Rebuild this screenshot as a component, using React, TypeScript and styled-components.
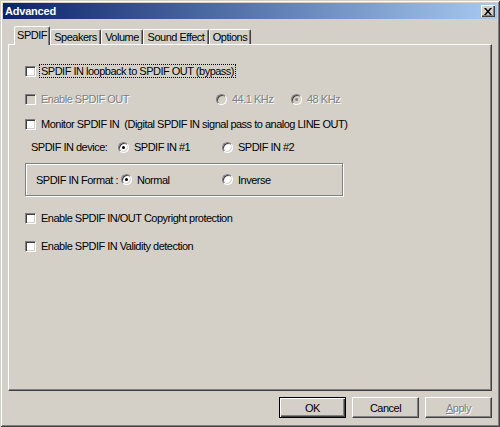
import React from 'react';
import styled, { createGlobalStyle } from 'styled-components';

const GlobalStyle = createGlobalStyle`
  html, body { margin: 0; padding: 0; background: #d4d0c8; }
  body { font-family: "Liberation Sans", Arial, sans-serif; }
`;

const Window = styled.div`
  box-sizing: border-box;
  width: 500px;
  height: 427px;
  padding: 3px;
  background: #d4d0c8;
  box-shadow: inset 1px 1px 0 #d4d0c8, inset -1px -1px 0 #404040, inset 2px 2px 0 #ffffff, inset -2px -2px 0 #808080;
  display: flex;
  flex-direction: column;
  font-size: 11px;
  letter-spacing: -0.5px;
  color: #000;
`;

const TitleBar = styled.div`
  height: 16px;
  display: flex;
  align-items: center;
  justify-content: space-between;
  padding: 0 2px 0 2px;
  background: linear-gradient(to right, #0a246a, #a6caf0);
`;

const Title = styled.span`
  color: #fff;
  font-weight: bold;
  font-size: 11px;
  letter-spacing: -0.2px;
  padding-left: 0;
`;

const CloseButton = styled.div`
  box-sizing: border-box;
  width: 14px;
  height: 12px;
  background: #d4d0c8;
  box-shadow: inset 1px 1px 0 #ffffff, inset -1px -1px 0 #404040, inset -2px -2px 0 #808080;
  display: flex;
  align-items: center;
  justify-content: center;
`;

const Body = styled.div`
  flex: 1;
  display: flex;
  flex-direction: column;
  padding: 0 5px;
`;

const TabStrip = styled.div`
  display: flex;
  align-items: flex-end;
  height: 18px;
  margin-top: 7px;
  padding-left: 6px;
`;

const Tab = styled.div<{ $active?: boolean; $w: number }>`
  box-sizing: border-box;
  position: relative;
  z-index: ${p => (p.$active ? 1 : 0)};
  width: ${p => p.$w}px;
  height: ${p => (p.$active ? 19 : 15)}px;
  margin-bottom: ${p => (p.$active ? -1 : 0)}px;
  background: #d4d0c8;
  border-top: 1px solid #fff;
  border-left: 1px solid #fff;
  border-right: 1px solid #404040;
  border-radius: 2px 2px 0 0;
  box-shadow: inset -1px 0 0 #808080;
  display: flex;
  align-items: ${p => (p.$active ? 'flex-start' : 'center')};
  padding-top: ${p => (p.$active ? 2 : 0)}px;
  justify-content: center;
`;

const Panel = styled.div`
  box-sizing: border-box;
  height: 347px;
  border-top: 1px solid #fff;
  border-left: 1px solid #fff;
  border-right: 1px solid #404040;
  border-bottom: 1px solid #404040;
  box-shadow: inset -1px -1px 0 #808080;
  padding: 19px 0 0 16px;
  display: flex;
  flex-direction: column;
`;

const Row = styled.div<{ $gap?: number; $indent?: number }>`
  display: flex;
  align-items: center;
  height: 14px;
  margin-top: ${p => p.$gap ?? 0}px;
  padding-left: ${p => p.$indent ?? 0}px;
  white-space: nowrap;
`;

const Cell = styled.div<{ $w?: number }>`
  display: flex;
  align-items: center;
  flex: none;
  width: ${p => (p.$w ? `${p.$w}px` : 'auto')};
`;

const Label = styled.span<{ $disabled?: boolean; $focus?: boolean }>`
  color: ${p => (p.$disabled ? '#808080' : '#000')};
  text-shadow: ${p => (p.$disabled ? '1px 1px 0 #ffffff' : 'none')};
  border: 1px ${p => (p.$focus ? 'dotted #000' : 'solid transparent')};
  padding: 0 1px;
  line-height: 12px;
`;

const Check = styled.span<{ $disabled?: boolean }>`
  box-sizing: border-box;
  flex: none;
  width: 11px;
  height: 11px;
  margin-right: 3px;
  background: ${p => (p.$disabled ? '#d4d0c8' : '#fff')};
  border-top: 1px solid #808080;
  border-left: 1px solid #808080;
  border-bottom: 1px solid #fff;
  border-right: 1px solid #fff;
  box-shadow: inset 1px 1px 0 #404040, inset -1px -1px 0 #d4d0c8;
`;

const Radio = styled.span<{ $checked?: boolean; $disabled?: boolean }>`
  box-sizing: border-box;
  flex: none;
  width: 11px;
  height: 11px;
  margin-right: 3px;
  border-radius: 50%;
  border: 1px solid;
  border-color: #808080 #ffffff #ffffff #808080;
  background: ${p => (p.$disabled ? '#d4d0c8' : '#fff')};
  box-shadow: inset 1px 1px 0 #404040, inset -1px -1px 0 #d4d0c8;
  display: flex;
  align-items: center;
  justify-content: center;
  &::after {
    content: '';
    width: 3px;
    height: 3px;
    border-radius: 50%;
    background: ${p => (p.$checked ? (p.$disabled ? '#808080' : '#000') : 'transparent')};
  }
`;

const Group = styled.div<{ $gap?: number }>`
  box-sizing: border-box;
  width: 318px;
  height: 33px;
  margin-top: ${p => p.$gap ?? 0}px;
  border: 1px solid #808080;
  box-shadow: inset 1px 1px 0 #ffffff, 1px 1px 0 #ffffff;
  display: flex;
  align-items: center;
  padding-left: 8px;
  white-space: nowrap;
`;

const ButtonRow = styled.div`
  display: flex;
  justify-content: flex-end;
  gap: 6px;
  margin-top: 6px;
`;

const Button = styled.div<{ $default?: boolean; $disabled?: boolean }>`
  box-sizing: border-box;
  width: 67px;
  height: 21px;
  display: flex;
  align-items: center;
  justify-content: center;
  background: #d4d0c8;
  border: 1px solid;
  border-color: ${p => (p.$default ? '#000' : '#ffffff #404040 #404040 #ffffff')};
  box-shadow: ${p =>
    p.$default
      ? 'inset 1px 1px 0 #ffffff, inset -1px -1px 0 #404040, inset -2px -2px 0 #808080'
      : 'inset -1px -1px 0 #808080'};
  color: ${p => (p.$disabled ? '#808080' : '#000')};
  text-shadow: ${p => (p.$disabled ? '1px 1px 0 #ffffff' : 'none')};
`;

const Mnemonic = styled.span`
  text-decoration: underline;
`;

const CloseIcon = () => (
  <svg width="8" height="7" viewBox="0 0 8 7">
    <path d="M0 0h2l2 2.5L6 0h2L5 3.5 8 7H6L4 4.5 2 7H0l3-3.5z" fill="#000" />
  </svg>
);

export default function App() {
  return (
    <>
      <GlobalStyle />
      <Window>
        <TitleBar>
          <Title>Advanced</Title>
          <CloseButton>
            <CloseIcon />
          </CloseButton>
        </TitleBar>
        <Body>
          <TabStrip>
            <Tab $active $w={36}>SPDIF</Tab>
            <Tab $w={51}>Speakers</Tab>
            <Tab $w={42}>Volume</Tab>
            <Tab $w={66}>Sound Effect</Tab>
            <Tab $w={42}>Options</Tab>
          </TabStrip>
          <Panel>
            <Row>
              <Check />
              <Label $focus>SPDIF IN loopback to SPDIF OUT (bypass)</Label>
            </Row>
            <Row $gap={14}>
              <Cell $w={191}>
                <Check $disabled />
                <Label $disabled>Enable SPDIF OUT</Label>
              </Cell>
              <Cell $w={75}>
                <Radio $disabled />
                <Label $disabled>44.1 KHz</Label>
              </Cell>
              <Cell>
                <Radio $disabled $checked />
                <Label $disabled>48 KHz</Label>
              </Cell>
            </Row>
            <Row $gap={11}>
              <Check />
              <Label>Monitor SPDIF IN&nbsp; (Digital SPDIF IN signal pass to analog LINE OUT)</Label>
            </Row>
            <Row $gap={9} $indent={4}>
              <Cell $w={89}>
                <Label>SPDIF IN device:</Label>
              </Cell>
              <Cell $w={104}>
                <Radio $checked />
                <Label>SPDIF IN #1</Label>
              </Cell>
              <Cell>
                <Radio />
                <Label>SPDIF IN #2</Label>
              </Cell>
            </Row>
            <Group $gap={9}>
              <Cell $w={87}>
                <Label>SPDIF IN Format :</Label>
              </Cell>
              <Cell $w={101}>
                <Radio $checked />
                <Label>Normal</Label>
              </Cell>
              <Cell>
                <Radio />
                <Label>Inverse</Label>
              </Cell>
            </Group>
            <Row $gap={15}>
              <Check />
              <Label>Enable SPDIF IN/OUT Copyright protection</Label>
            </Row>
            <Row $gap={14}>
              <Check />
              <Label>Enable SPDIF IN Validity detection</Label>
            </Row>
          </Panel>
          <ButtonRow>
            <Button $default>OK</Button>
            <Button>Cancel</Button>
            <Button $disabled>
              <span>
                <Mnemonic>A</Mnemonic>pply
              </span>
            </Button>
          </ButtonRow>
        </Body>
      </Window>
    </>
  );
}
